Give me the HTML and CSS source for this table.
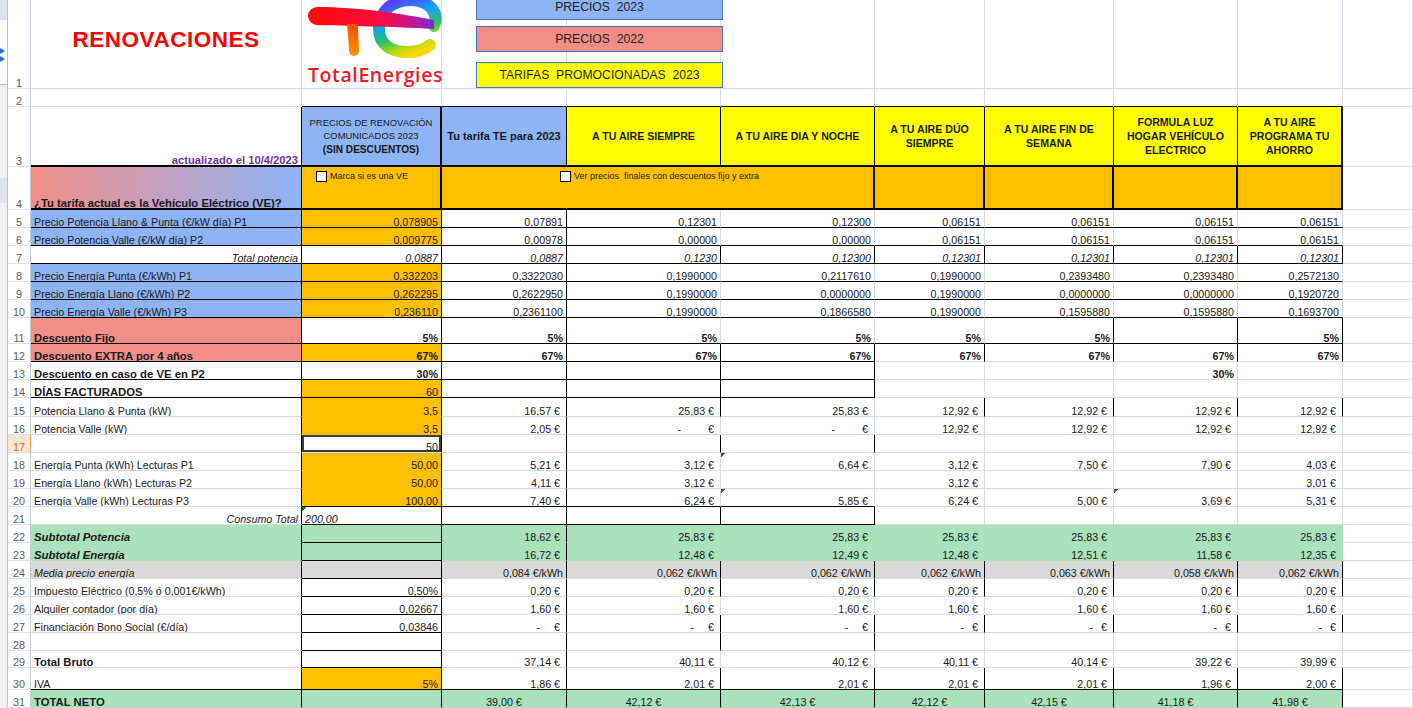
FILE: index.html
```html
<!DOCTYPE html>
<html lang="es">
<head>
<meta charset="utf-8">
<title>Renovaciones TotalEnergies</title>
<link rel="stylesheet" href="styles.css">
</head>
<body>
<div class="sheet">
  <div class="strip">
    <div class="s1"></div>
    <div class="s2"><svg class="sicon" viewBox="0 0 8 16" width="8" height="16" aria-hidden="true"><path d="M0,0 L5,3 L0,6 L-5,3 Z M0,8 L5,11 L0,14 L-5,11 Z" fill="#2f6fd6"/></svg></div>
    <div class="s3"><div class="s4"></div></div>
  </div>

  <!-- row 1 -->
  <div class="h">1</div>
  <div class="c title">RENOVACIONES</div>
  <div class="c logo">
    <svg class="mark" viewBox="0 0 134 60" width="134" height="60" aria-hidden="true">
      <defs>
        <linearGradient id="gE" x1="0.3" y1="0" x2="0.7" y2="1">
          <stop offset="0" stop-color="#5a3bff"/>
          <stop offset="0.33" stop-color="#139fff"/>
          <stop offset="0.62" stop-color="#2cc06a"/>
          <stop offset="0.85" stop-color="#b6dc10"/>
          <stop offset="1" stop-color="#ffd400"/>
        </linearGradient>
        <linearGradient id="gBar" x1="0" y1="0" x2="1" y2="0">
          <stop offset="0" stop-color="#ff0a0a"/>
          <stop offset="0.55" stop-color="#ff0a3c"/>
          <stop offset="0.8" stop-color="#c8148c"/>
          <stop offset="1" stop-color="#7a2cd8"/>
        </linearGradient>
        <linearGradient id="gT" x1="0" y1="0" x2="0" y2="1">
          <stop offset="0" stop-color="#ff4a00"/>
          <stop offset="1" stop-color="#ff9800"/>
        </linearGradient>
      </defs>
      <path d="M126,26 C132,12 120,0 102,0 C84,0 71,12 71,29 C71,45 84,52 100,52 C110,52 117,49 122,45" fill="none" stroke="url(#gE)" stroke-width="12" stroke-linecap="round"/>
      <path d="M9,7 C50,7 95,14 126,20 L126,29 C95,27 50,26 9,25 A9,9 0 0 1 9,7 Z" fill="url(#gBar)"/>
      <path d="M39,24 C40,36 41,46 41,51 A5,5 0 0 0 51,51 C51,44 50,34 50,24 Z" fill="url(#gT)"/>
    </svg>
    <div class="brand">TotalEnergies</div>
  </div>
  <div class="c"></div><div class="c"></div><div class="c"></div><div class="c"></div><div class="c"></div><div class="c"></div><div class="c"></div><div class="c"></div>

  <!-- row 2 -->
  <div class="h">2</div>
  <div class="c"></div>
  <div class="c b"></div><div class="c b"></div><div class="c b"></div><div class="c b"></div><div class="c b"></div><div class="c b"></div><div class="c b"></div><div class="c b"></div>
  <div class="c"></div>

  <!-- row 3 -->
  <div class="h">3</div>
  <div class="c r B date">actualizado el 10/4/2023</div>
  <div class="c bl R B hd sm"><span>PRECIOS DE RENOVACIÓN<br>COMUNICADOS 2023<br><b>(SIN DESCUENTOS)</b></span></div>
  <div class="c bl r B hd big"><span>Tu tarifa TE para 2023</span></div>
  <div class="c ye r B hd"><span>A TU AIRE SIEMPRE</span></div>
  <div class="c ye r B hd"><span>A TU AIRE DIA Y NOCHE</span></div>
  <div class="c ye r B hd"><span>A TU AIRE DÚO<br>SIEMPRE</span></div>
  <div class="c ye r B hd"><span>A TU AIRE FIN DE<br>SEMANA</span></div>
  <div class="c ye r B hd"><span>FORMULA LUZ<br>HOGAR VEHÍCULO<br>ELECTRICO</span></div>
  <div class="c ye R B hd"><span>A TU AIRE<br>PROGRAMA TU<br>AHORRO</span></div>
  <div class="c"></div>

  <!-- row 4 -->
  <div class="h">4</div>
  <div class="c gd r B kb">¿Tu tarifa actual es la Vehículo Eléctrico (VE)?</div>
  <div class="c or R B chk"><span class="box"></span><span>Marca si es una VE</span></div>
  <div class="c or R B chk wide"><span class="box"></span><span>Ver precios  finales con descuentos fijo y extra</span></div>
  <div class="c or R B"></div><div class="c or R B"></div><div class="c or R B"></div><div class="c or R B"></div>
  <div class="c"></div>

  <!-- row 5 -->
  <div class="h">5</div>
  <div class="c bl r b">Precio Potencia Llano &amp; Punta (€/kW día) P1</div>
  <div class="c or r b n">0,078905</div>
  <div class="c r b n">0,07891</div>
  <div class="c b n">0,12301</div>
  <div class="c b n">0,12300</div>
  <div class="c b n">0,06151</div><div class="c b n">0,06151</div><div class="c b n">0,06151</div><div class="c b n">0,06151</div>
  <div class="c"></div>

  <!-- row 6 -->
  <div class="h">6</div>
  <div class="c bl r b">Precio Potencia Valle (€/kW día) P2</div>
  <div class="c or r b n">0,009775</div>
  <div class="c r b n">0,00978</div>
  <div class="c b n">0,00000</div>
  <div class="c b n">0,00000</div>
  <div class="c b n">0,06151</div><div class="c b n">0,06151</div><div class="c b n">0,06151</div><div class="c b n">0,06151</div>
  <div class="c"></div>

  <!-- row 7 -->
  <div class="h">7</div>
  <div class="c r b n i">Total potencia</div>
  <div class="c r b n i">0,0887</div>
  <div class="c r b n i">0,0887</div>
  <div class="c r b n i">0,1230</div>
  <div class="c r b n i">0,12300</div>
  <div class="c r b n i">0,12301</div><div class="c r b n i">0,12301</div><div class="c r b n i">0,12301</div><div class="c r b n i">0,12301</div>
  <div class="c"></div>

  <!-- row 8 -->
  <div class="h">8</div>
  <div class="c bl r b">Precio Energía Punta (€/kWh) P1</div>
  <div class="c or r b n">0,332203</div>
  <div class="c r b n">0,3322030</div>
  <div class="c b n">0,1990000</div>
  <div class="c b n">0,2117610</div>
  <div class="c b n">0,1990000</div>
  <div class="c b n">0,2393480</div>
  <div class="c b n">0,2393480</div>
  <div class="c b n">0,2572130</div>
  <div class="c"></div>

  <!-- row 9 -->
  <div class="h">9</div>
  <div class="c bl r b">Precio Energía Llano (€/kWh) P2</div>
  <div class="c or r b n">0,262295</div>
  <div class="c r b n">0,2622950</div>
  <div class="c b n">0,1990000</div>
  <div class="c b n">0,0000000</div>
  <div class="c b n">0,1990000</div>
  <div class="c b n">0,0000000</div>
  <div class="c b n">0,0000000</div>
  <div class="c b n">0,1920720</div>
  <div class="c"></div>

  <!-- row 10 -->
  <div class="h">10</div>
  <div class="c bl r b">Precio Energía Valle (€/kWh) P3</div>
  <div class="c or r b n">0,236110</div>
  <div class="c r b n">0,2361100</div>
  <div class="c b n">0,1990000</div>
  <div class="c b n">0,1866580</div>
  <div class="c b n">0,1990000</div>
  <div class="c b n">0,1595880</div>
  <div class="c b n">0,1595880</div>
  <div class="c b n">0,1693700</div>
  <div class="c"></div>

  <!-- row 11 -->
  <div class="h">11</div>
  <div class="c sa r b kb">Descuento Fijo</div>
  <div class="c r b n k">5%</div>
  <div class="c r b n k">5%</div>
  <div class="c b n k">5%</div>
  <div class="c b n k">5%</div>
  <div class="c b n k">5%</div>
  <div class="c r b n k">5%</div>
  <div class="c r b"></div>
  <div class="c r b n k">5%</div>
  <div class="c"></div>

  <!-- row 12 -->
  <div class="h">12</div>
  <div class="c sa r b kb">Descuento EXTRA por 4 años</div>
  <div class="c or r b n k">67%</div>
  <div class="c r b n k">67%</div>
  <div class="c r b n k">67%</div>
  <div class="c r b n k">67%</div>
  <div class="c r n k">67%</div><div class="c r n k">67%</div><div class="c r n k">67%</div><div class="c r n k">67%</div>
  <div class="c"></div>

  <!-- row 13 -->
  <div class="h">13</div>
  <div class="c r b kb">Descuento en caso de VE en P2</div>
  <div class="c r b n k">30%</div>
  <div class="c r b"></div><div class="c r b"></div><div class="c r b"></div>
  <div class="c"></div><div class="c"></div>
  <div class="c n k">30%</div>
  <div class="c"></div>
  <div class="c"></div>

  <!-- row 14 -->
  <div class="h">14</div>
  <div class="c r b kb">DÍAS FACTURADOS</div>
  <div class="c or r b n">60</div>
  <div class="c r b"></div><div class="c r b"></div><div class="c r b"></div>
  <div class="c"></div><div class="c"></div><div class="c"></div><div class="c"></div>
  <div class="c"></div>

  <!-- row 15 -->
  <div class="h">15</div>
  <div class="c r">Potencia Llano &amp; Punta (kW)</div>
  <div class="c or r n">3,5</div>
  <div class="c r e">16,57 €</div>
  <div class="c r e">25,83 €</div>
  <div class="c e">25,83 €</div>
  <div class="c r e">12,92 €</div><div class="c r e">12,92 €</div><div class="c r e">12,92 €</div><div class="c r e">12,92 €</div>
  <div class="c"></div>

  <!-- row 16 -->
  <div class="h">16</div>
  <div class="c r">Potencia Valle (kW)</div>
  <div class="c or r n">3,5</div>
  <div class="c r e">2,05 €</div>
  <div class="c e"><span class="dash w1">-</span>€</div>
  <div class="c e"><span class="dash w1">-</span>€</div>
  <div class="c e">12,92 €</div><div class="c e">12,92 €</div><div class="c e">12,92 €</div><div class="c e">12,92 €</div>
  <div class="c"></div>

  <!-- row 17 -->
  <div class="h act">17</div>
  <div class="c r"></div>
  <div class="c r n sel">50</div>
  <div class="c r"></div><div class="c r"></div><div class="c r"></div>
  <div class="c"></div><div class="c"></div><div class="c"></div><div class="c"></div>
  <div class="c"></div>

  <!-- row 18 -->
  <div class="h">18</div>
  <div class="c r">Energía Punta (kWh) Lecturas P1</div>
  <div class="c or r n">50,00</div>
  <div class="c r e">5,21 €</div>
  <div class="c e">3,12 €</div>
  <div class="c e tri">6,64 €</div>
  <div class="c e">3,12 €</div>
  <div class="c e">7,50 €</div>
  <div class="c e">7,90 €</div>
  <div class="c e">4,03 €</div>
  <div class="c"></div>

  <!-- row 19 -->
  <div class="h">19</div>
  <div class="c r">Energía Llano (kWh) Lecturas P2</div>
  <div class="c or r n">50,00</div>
  <div class="c r e">4,11 €</div>
  <div class="c e">3,12 €</div>
  <div class="c"></div>
  <div class="c e">3,12 €</div>
  <div class="c"></div>
  <div class="c"></div>
  <div class="c e">3,01 €</div>
  <div class="c"></div>

  <!-- row 20 -->
  <div class="h">20</div>
  <div class="c r">Energía Valle (kWh) Lecturas P3</div>
  <div class="c or r b n">100,00</div>
  <div class="c r b e">7,40 €</div>
  <div class="c b e">6,24 €</div>
  <div class="c b e tri">5,85 €</div>
  <div class="c e">6,24 €</div>
  <div class="c e">5,00 €</div>
  <div class="c e tri">3,69 €</div>
  <div class="c e">5,31 €</div>
  <div class="c"></div>

  <!-- row 21 -->
  <div class="h">21</div>
  <div class="c r n i">Consumo Total</div>
  <div class="c r b i tri">200,00</div>
  <div class="c r b"></div><div class="c r b"></div><div class="c r b"></div>
  <div class="c"></div><div class="c"></div><div class="c"></div><div class="c"></div>
  <div class="c"></div>

  <!-- row 22 -->
  <div class="h">22</div>
  <div class="c gr r ki">Subtotal Potencia</div>
  <div class="c gr r b"></div>
  <div class="c gr r e">18,62 €</div>
  <div class="c gr e">25,83 €</div>
  <div class="c gr e">25,83 €</div>
  <div class="c gr e">25,83 €</div>
  <div class="c gr e">25,83 €</div>
  <div class="c gr e">25,83 €</div>
  <div class="c gr e">25,83 €</div>
  <div class="c"></div>

  <!-- row 23 -->
  <div class="h">23</div>
  <div class="c gr r ki">Subtotal Energía</div>
  <div class="c gr r b"></div>
  <div class="c gr r e">16,72 €</div>
  <div class="c gr e">12,48 €</div>
  <div class="c gr e">12,49 €</div>
  <div class="c gr e">12,48 €</div>
  <div class="c gr e">12,51 €</div>
  <div class="c gr e">11,58 €</div>
  <div class="c gr e">12,35 €</div>
  <div class="c"></div>

  <!-- row 24 -->
  <div class="h">24</div>
  <div class="c gy r i">Media precio energía</div>
  <div class="c gy r b"></div>
  <div class="c gy r n">0,084 €/kWh</div>
  <div class="c gy r n">0,062 €/kWh</div>
  <div class="c gy r n">0,062 €/kWh</div>
  <div class="c gy r n">0,062 €/kWh</div>
  <div class="c gy r n">0,063 €/kWh</div>
  <div class="c gy r n">0,058 €/kWh</div>
  <div class="c gy r n">0,062 €/kWh</div>
  <div class="c"></div>

  <!-- row 25 -->
  <div class="h">25</div>
  <div class="c r">Impuesto Eléctrico (0,5% ó 0,001€/kWh)</div>
  <div class="c r b n">0,50%</div>
  <div class="c r e">0,20 €</div><div class="c r e">0,20 €</div><div class="c r e">0,20 €</div><div class="c r e">0,20 €</div><div class="c r e">0,20 €</div><div class="c r e">0,20 €</div><div class="c r e">0,20 €</div>
  <div class="c"></div>

  <!-- row 26 -->
  <div class="h">26</div>
  <div class="c r">Alquiler contador (por día)</div>
  <div class="c r b n">0,02667</div>
  <div class="c r e">1,60 €</div>
  <div class="c e">1,60 €</div><div class="c e">1,60 €</div><div class="c e">1,60 €</div><div class="c e">1,60 €</div><div class="c e">1,60 €</div><div class="c e">1,60 €</div>
  <div class="c"></div>

  <!-- row 27 -->
  <div class="h">27</div>
  <div class="c r">Financiación Bono Social (€/día)</div>
  <div class="c r b n">0,03846</div>
  <div class="c r e"><span class="dash w2">-</span>€</div>
  <div class="c r e"><span class="dash w2">-</span>€</div>
  <div class="c r e"><span class="dash w2">-</span>€</div>
  <div class="c r e"><span class="dash w3">-</span>€</div>
  <div class="c r e"><span class="dash w3">-</span>€</div>
  <div class="c r e"><span class="dash w3">-</span>€</div>
  <div class="c r e"><span class="dash w3">-</span>€</div>
  <div class="c"></div>

  <!-- row 28 -->
  <div class="h">28</div>
  <div class="c r"></div>
  <div class="c r b"></div>
  <div class="c r"></div><div class="c r"></div><div class="c r"></div>
  <div class="c"></div><div class="c"></div><div class="c"></div><div class="c"></div>
  <div class="c"></div>

  <!-- row 29 -->
  <div class="h">29</div>
  <div class="c r kb">Total Bruto</div>
  <div class="c r b"></div>
  <div class="c r e">37,14 €</div>
  <div class="c e">40,11 €</div>
  <div class="c e">40,12 €</div>
  <div class="c e">40,11 €</div>
  <div class="c e">40,14 €</div>
  <div class="c e">39,22 €</div>
  <div class="c e">39,99 €</div>
  <div class="c"></div>

  <!-- row 30 -->
  <div class="h">30</div>
  <div class="c r b">IVA</div>
  <div class="c or r b n">5%</div>
  <div class="c r b e">1,86 €</div>
  <div class="c r b e">2,01 €</div>
  <div class="c r b e">2,01 €</div>
  <div class="c r b e">2,01 €</div>
  <div class="c r b e">2,01 €</div>
  <div class="c r b e">1,96 €</div>
  <div class="c r b e">2,00 €</div>
  <div class="c"></div>

  <!-- row 31 -->
  <div class="h">31</div>
  <div class="c gr r kb">TOTAL NETO</div>
  <div class="c gr r"></div>
  <div class="c gr r m">39,00 €</div>
  <div class="c gr r m">42,12 €</div>
  <div class="c gr r m">42,13 €</div>
  <div class="c gr r m">42,12 €</div>
  <div class="c gr r m">42,15 €</div>
  <div class="c gr r m">41,18 €</div>
  <div class="c gr r m">41,98 €</div>
  <div class="c"></div>

  <div class="legend">
    <div class="lg lb">PRECIOS  2023</div>
    <div class="lg ls">PRECIOS  2022</div>
    <div class="lg ly">TARIFAS  PROMOCIONADAS  2023</div>
  </div>
</div>
</body>
</html>
```

FILE: styles.css
```css
* { box-sizing: border-box; }
html, body { margin: 0; padding: 0; background: #fff; }
body {
  font-family: "Liberation Sans", Arial, sans-serif;
  color: #1a1a1a;
  width: 1413px;
  height: 708px;
  overflow: hidden;
}

.sheet {
  position: relative;
  display: grid;
  grid-template-columns: 8px 23px 271px 140px 125px 154px 154px 110px 129px 124px 105px 70px;
  grid-template-rows: 89px 18px 60px 43px repeat(6, 18px) 26px repeat(3, 18px) 19px repeat(13, 18px) 17px 22px 18px;
}

/* left application strip */
.strip {
  grid-column: 1;
  grid-row: 1 / -1;
  background: #f0f0f0;
  border-right: 1px solid #c3c3c3;
  overflow: hidden;
  display: flex;
  flex-direction: column;
}
.s1 { height: 20px; background: #dde3ee; flex: none; }
.s2 { height: 65px; background: #fafafa; flex: none; padding-top: 28px; border-bottom: 1px solid #bdbdbd; }
.sicon { display: block; }
.s3 { padding-top: 93px; flex: none; }
.s4 { height: 25px; background: #dfe3f0; }

/* row headers */
.h {
  border-right: 1px solid #c5ccd8;
  border-bottom: 1px solid #dde1e8;
  display: flex;
  align-items: flex-end;
  justify-content: center;
  font-size: 10.8px;
  line-height: 10px;
  color: #5b5b5b;
  background: #fff;
}
.h.act { background: #fde6cf; color: #d0691a; border-right-color: #e8a15c; }

/* cells */
.c {
  border-right: 1px solid #d5dbe5;
  border-bottom: 1px solid #d5dbe5;
  display: flex;
  align-items: flex-end;
  padding: 0 3px;
  font-size: 10.7px;
  line-height: 10px;
  white-space: nowrap;
  overflow: hidden;
  min-width: 0;
}

/* fills */
.bl { background: #8db4f7; border-color: #8db4f7; }
.sa { background: #f28e86; border-color: #f28e86; }
.ye { background: #ffff00; border-color: #ffff00; }
.or { background: #ffc000; border-color: #ffc000; }
.gr { background: #a9e2ba; border-color: #a9e2ba; }
.gy { background: #d9d9d9; border-color: #d9d9d9; }
.gd { background: linear-gradient(90deg, #f28e86 0%, #c3a2c2 50%, #8db4f7 100%); border-color: transparent; }

/* borders */
.r { border-right-color: #000; }
.b { border-bottom-color: #000; }
.R { border-right: 2px solid #000; }
.B { border-bottom: 2px solid #000; }

/* alignment & type */
.n { justify-content: flex-end; }
.e { justify-content: flex-end; padding-right: 6px; }
.m { justify-content: center; }
.i { font-style: italic; }
.k { font-weight: bold; }
.kb { font-weight: bold; font-size: 11.3px; }
.ki { font-weight: bold; font-style: italic; font-size: 11.4px; }

.dash { display: inline-block; }
.w1 { margin-right: 27px; }
.w2 { margin-right: 14px; }
.w3 { margin-right: 8px; }

.tri {
  background-image: linear-gradient(135deg, #1f7a1f 0 3.5px, transparent 3.5px);
  background-size: 7px 7px;
  background-repeat: no-repeat;
  background-position: 0 0;
}
.sel { box-shadow: inset 0 0 0 2px #3d3d3d; }

/* title & logo */
.title {
  justify-content: center;
  align-items: flex-start;
  padding-top: 28px;
  color: #ff0000;
  font-weight: bold;
  font-size: 22.5px;
  letter-spacing: 0.5px;
  line-height: 24px;
}
.logo {
  flex-direction: column;
  align-items: flex-start;
  justify-content: flex-start;
  padding: 0 0 0 6px;
  overflow: visible;
}
.mark { display: block; width: 134px; height: 60px; flex: none; }
.brand {
  font-family: "Open Sans", "Liberation Sans", sans-serif;
  font-weight: 600;
  font-size: 19.5px;
  letter-spacing: 0.6px;
  line-height: 22px;
  color: #ec1c24;
  margin-top: 4px;
}

/* header row */
.date {
  justify-content: flex-end;
  color: #7030a0;
  font-weight: bold;
  font-size: 11.2px;
}
.hd {
  align-items: center;
  justify-content: center;
  text-align: center;
  white-space: nowrap;
  font-weight: bold;
  font-size: 10.6px;
  line-height: 14px;
  padding: 0 2px;
  color: #1a1a1a;
}
.hd span { display: block; }
.sm { font-weight: normal; font-size: 9.4px; line-height: 13.5px; }
.sm b { font-weight: bold; font-size: 10.1px; }
.big { font-size: 11px; }

/* checkboxes */
.chk {
  align-items: flex-start;
  padding: 4px 0 0 14px;
  font-size: 9px;
  line-height: 11px;
  gap: 3px;
  white-space: pre;
}
.box {
  width: 11px;
  height: 11px;
  border: 1px solid #000;
  background: #fff;
  flex: none;
}
.wide { grid-column: span 3; padding-left: 118px; }

/* floating legend shapes */
.legend {
  position: absolute;
  left: 476px;
  top: -6px;
  width: 247px;
  display: flex;
  flex-direction: column;
}
.lg {
  height: 26px;
  border: 1.5px solid #4a73c6;
  display: flex;
  align-items: center;
  justify-content: center;
  font-size: 12.2px;
  white-space: pre;
  color: #1f1f1f;
}
.lb { background: #8db4f7; }
.ls { background: #f28e86; margin-top: 6px; }
.ly { background: #ffff00; margin-top: 10px; }
```
